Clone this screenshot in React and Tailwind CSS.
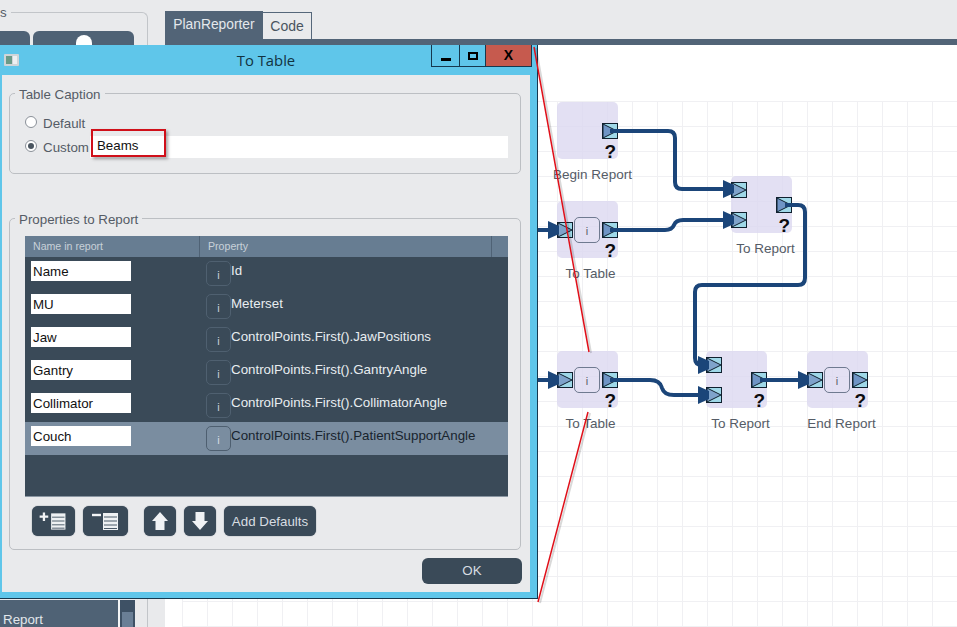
const rows = [
  { name: 'Name', prop: 'Id' },
  { name: 'MU', prop: 'Meterset' },
  { name: 'Jaw', prop: 'ControlPoints.First().JawPositions' },
  { name: 'Gantry', prop: 'ControlPoints.First().GantryAngle' },
  { name: 'Collimator', prop: 'ControlPoints.First().CollimatorAngle' },
  { name: 'Couch', prop: 'ControlPoints.First().PatientSupportAngle', selected: true },
]

const wires = [
  'M610 131 H668 Q675 131 675 138 V182 Q675 189 682 189 H727',
  'M610 230 H665 Q672 230 674 225 Q676 220 683 220 H727',
  'M785 205 H798 Q805 205 805 212 V278 Q805 285 798 285 H702 Q695 285 695 292 V358 Q695 365 702 365',
  'M610 380 H650 Q660 380 662 388 Q664 395 674 395 H702',
  'M760 380 H802',
  'M530 230 H552',
  'M530 380 H552',
]

const heads = [[723, 189], [723, 220], [698, 365], [698, 395], [798, 380], [548, 230], [548, 380]]

const Port = ({ className, input }) => (
  <svg width="16" height="16" viewBox="0 0 16 16" className={`absolute ${className}`}>
    <rect x="0.5" y="0.5" width="15" height="15" fill="#9fd8e8" stroke="#10202e" />
    <path d="M1 1 L15 8 L1 15 Z" fill={input ? '#7fa3cb' : '#6f94c5'} stroke="#10202e" strokeWidth="1" />
  </svg>
)

const InfoBtn = ({ className }) => (
  <div className={`flex items-center justify-center rounded-[5px] border border-[#6f7a90] text-[11px] text-[#555c66] ${className}`}>
    <span className="mt-[3px]">i</span>
  </div>
)

const Node = ({ className, label, labelClass, children }) => (
  <div className={`absolute w-[61px] h-[57px] rounded-[5px] bg-[#dcd8f0]/80 ${className}`}>
    {children}
    <span className="absolute right-[2px] bottom-[-2px] text-[19px] leading-[19px] font-bold text-[#0c0c10]">?</span>
    <span className={`absolute top-[65px] left-1/2 -translate-x-1/2 whitespace-nowrap text-[13.5px] leading-[15px] text-[#555c66] ${labelClass}`}>{label}</span>
  </div>
)

const Radio = ({ checked }) => (
  <div className="mt-[-2px] w-[12px] h-[12px] rounded-full border border-[#8a9098] bg-white flex items-center justify-center shrink-0">
    {checked && <div className="w-[6px] h-[6px] rounded-full bg-[#4a5560]" />}
  </div>
)

const Row = ({ name, prop, selected }) => (
  <div className={`flex h-[33px] ${selected ? 'bg-[#7a8da0] text-[#18242e]' : 'text-[#e8edf0]'}`}>
    <div className="ml-[6px] mt-[4px] w-[100px] h-[20px] bg-white px-[2px] text-[13.33px] leading-[21px] text-[#111]">{name}</div>
    <div className={`ml-[75px] mt-[4px] w-[25px] h-[25px] rounded-[5px] border flex items-center justify-center text-[11px] ${selected ? 'border-[#4e5f70] text-[#d5dce2]' : 'border-[#4f6070] text-[#c9d1d9]'}`}>
      <span className="mt-[4px]">i</span>
    </div>
    <div className="mt-[6px] text-[13.33px] leading-[15px] whitespace-nowrap">{prop}</div>
  </div>
)

const ListIcon = ({ sign }) => (
  <svg width="45" height="30" viewBox="0 0 45 30">
    {sign === 'plus' ? (
      <path d="M8 10.5 H17 M12.5 6 V15" stroke="#f2f4f6" strokeWidth="2.4" />
    ) : (
      <path d="M9 9 H18" stroke="#f2f4f6" strokeWidth="2.4" />
    )}
    <rect x="20" y="7" width="15" height="17" fill="#eef1f3" />
    <path d="M21 11 H34 M21 15 H34 M21 19 H34 M21 22.5 H34" stroke="#4a5a68" strokeWidth="1" />
  </svg>
)

const ToolBtn = ({ className, children }) => (
  <div className={`h-[30px] rounded-[6px] bg-[#3a4a58] flex items-center justify-center text-[13.33px] text-[#d8dde2] shadow-[0_0_1px_#3a4a58] ${className}`}>
    {children}
  </div>
)

export default function App() {
  return (
    <div className="relative w-[957px] h-[627px] overflow-hidden bg-[#e9eaec] font-['Liberation_Sans',sans-serif] flex">
      {/* left panel */}
      <div className="w-[165px] shrink-0 pt-[5px] pr-[17px]">
        <fieldset className="h-[622px] rounded-tr-[6px] border-t border-r border-[#c2c5c9] flex flex-col justify-between pt-[11px]">
          <legend className="pr-[4px] text-[13.33px] leading-[15px] text-[#555c66]">s</legend>
          <div className="flex gap-[3px] pr-[13px] h-[16px]">
            <div className="w-[30px] rounded-tr-[6px] bg-[#4f6275]" />
            <div className="flex-1 rounded-t-[6px] bg-[#4f6275] flex justify-center pt-[4px]">
              <div className="w-[16px] h-[12px] rounded-t-full bg-white" />
            </div>
          </div>
          <div className="flex h-[27px]">
            <div className="w-[118px] bg-[#4f6275] pl-[3px] pt-[12px] text-[13.33px] leading-[15px] text-[#e2e7ec]">Report</div>
            <div className="w-[2px] bg-[#f4f5f6]" />
            <div className="w-[15px] bg-[#3e5165] px-[2px] pt-[12px]">
              <div className="h-[15px] bg-[#6a7f96]" />
            </div>
          </div>
        </fieldset>
      </div>

      {/* designer */}
      <div className="flex-1 flex flex-col">
        <div className="flex items-end h-[39px] pt-[11px]">
          <div className="w-[98px] h-[28px] bg-[#526477] text-center text-[13.8px] leading-[28px] text-[#e4e8ec]">PlanReporter</div>
          <div className="w-[49px] h-[27px] bg-[#e9eaec] border-t border-r border-[#55677a] text-center text-[14px] leading-[26px] text-[#4a5560]">Code</div>
        </div>
        <div className="h-[6px] bg-[#526477]" />
        <div className="relative flex-1 bg-white">
          <div className="absolute left-[17px] top-[56px] right-0 bottom-0 bg-[linear-gradient(to_right,#f0f0f3_1px,transparent_1px),linear-gradient(to_bottom,#f0f0f3_1px,transparent_1px)] bg-[length:25px_25px]" />
          <Node className="left-[392px] top-[57px]" label="Begin Report" labelClass="ml-[5px]">
            <Port className="right-0 top-[21px]" />
          </Node>
          <Node className="left-[392px] top-[156px]" label="To Table" labelClass="ml-[3px]">
            <Port className="left-0 top-[21px]" input />
            <InfoBtn className="absolute left-[17px] top-[16px] w-[26px] h-[26px]" />
            <Port className="right-0 top-[21px]" />
          </Node>
          <Node className="left-[566px] top-[131px]" label="To Report" labelClass="ml-[4px]">
            <Port className="left-0 top-[6px]" input />
            <Port className="left-0 top-[36px]" input />
            <Port className="right-0 top-[21px]" />
          </Node>
          <Node className="left-[392px] top-[306px]" label="To Table" labelClass="ml-[3px]">
            <Port className="left-0 top-[21px]" input />
            <InfoBtn className="absolute left-[17px] top-[16px] w-[26px] h-[26px]" />
            <Port className="right-0 top-[21px]" />
          </Node>
          <Node className="left-[541px] top-[306px]" label="To Report" labelClass="ml-[4px]">
            <Port className="left-0 top-[6px]" input />
            <Port className="left-0 top-[36px]" input />
            <Port className="right-0 top-[21px]" />
          </Node>
          <Node className="left-[642px] top-[306px]" label="End Report" labelClass="ml-[4px]">
            <Port className="left-0 top-[21px]" input />
            <InfoBtn className="absolute left-[17px] top-[16px] w-[26px] h-[26px]" />
            <Port className="right-0 top-[21px]" />
          </Node>
        </div>
      </div>

      {/* wires */}
      <svg width="957" height="627" viewBox="0 0 957 627" className="absolute left-0 top-0 pointer-events-none">
        {wires.map((d) => (
          <path key={d} d={d} fill="none" stroke="#1b4579" strokeWidth="4" />
        ))}
        {heads.map(([x, y]) => (
          <path key={`${x}-${y}`} d={`M${x} ${y - 9} L${x + 11} ${y - 4} L${x + 11} ${y + 4} L${x} ${y + 9} Z`} fill="#1b4579" />
        ))}
      </svg>

      {/* dialog */}
      <div className="absolute left-0 top-[45px] w-[538px] h-[554px] bg-[#5fc6ea] border-r border-b border-[#16384e] flex flex-col">
        <div className="relative h-[30px] shrink-0 flex items-center justify-center">
          <svg width="15" height="12" viewBox="0 0 15 12" className="absolute left-[4px] top-[9px]">
            <rect x="0" y="0" width="15" height="12" rx="1" fill="#d0d5d8" />
            <rect x="2" y="2" width="6" height="8" fill="#6a9a88" />
            <rect x="9" y="2" width="4" height="8" fill="#eef0f2" />
          </svg>
          <span className="ml-[-5px] font-['Open_Sans',sans-serif] text-[14.8px] text-[#12333f]">To Table</span>
          <div className="absolute left-[431px] top-0 h-[22px] flex border-b border-l border-r border-[#16384e]">
            <div className="w-[28px] flex items-end justify-center pb-[5px] border-r border-[#16384e]">
              <div className="w-[10px] h-[3px] bg-black" />
            </div>
            <div className="w-[26px] flex items-center justify-center border-r border-[#16384e]">
              <div className="w-[10px] h-[8px] border-2 border-black" />
            </div>
            <div className="w-[45px] bg-[#c65a4e] flex items-center justify-center pb-[2px] text-[14px] leading-[14px] font-bold text-black">X</div>
          </div>
        </div>

        <div className="ml-[2px] mr-[7px] mb-[6px] flex-1 bg-[#e9eaec] flex flex-col pl-[7px] pr-[9px] pt-[10px]">
          <fieldset className="h-[89px] rounded-[5px] border border-[#bcbfc3] pl-[15px] pr-[12px]">
            <legend className="ml-[-10px] px-[4px] pt-[3px] text-[13.33px] leading-[13px] text-[#555c66]">Table Caption</legend>
            <div className="flex items-center h-[22px] mt-[11px] gap-[6px] text-[13.33px] text-[#555c66]">
              <Radio />
              <span className="mt-[1px]">Default</span>
            </div>
            <div className="flex items-center h-[22px] mt-[2px] gap-[6px] text-[13.33px] text-[#555c66]">
              <Radio checked />
              <span className="mt-[2px]">Custom</span>
              <div className="relative flex-1 ml-[-5px] h-[22px] bg-white pl-[7px] text-[13.33px] leading-[19px] text-[#111]">
                Beams
                <div className="absolute left-[1px] top-[-7px] w-[75px] h-[28px] border-2 border-[#d0101a] shadow-[2px_2px_3px_rgba(0,0,0,0.35)]" />
              </div>
            </div>
          </fieldset>

          <fieldset className="mt-[36px] h-[340px] rounded-[5px] border border-[#bcbfc3] pl-[15px] pr-[12px]">
            <legend className="ml-[-10px] px-[4px] pt-[3px] text-[13.33px] leading-[13px] text-[#555c66]">Properties to Report</legend>
            <div className="mt-[10px] h-[261px] bg-[#3a4a58] border-b border-[#8a96a2]">
              <div className="flex h-[21px] bg-[#677d92] text-[10.6px] leading-[21px] text-[#c8d1d9]">
                <div className="w-[175px] pl-[8px] border-r border-[#4f6275]">Name in report</div>
                <div className="w-[292px] pl-[8px] border-r border-[#4f6275]">Property</div>
              </div>
              {rows.map((r) => (
                <Row key={r.name} {...r} />
              ))}
            </div>
            <div className="flex mt-[9px] ml-[7px]">
              <ToolBtn className="w-[43px]"><ListIcon sign="plus" /></ToolBtn>
              <ToolBtn className="w-[45px] ml-[8px]"><ListIcon sign="minus" /></ToolBtn>
              <ToolBtn className="w-[32px] ml-[16px]">
                <svg width="32" height="30" viewBox="0 0 32 30">
                  <path d="M16 6 L24 15 H20.5 V24 H11.5 V15 H8 Z" fill="#f0f2f4" />
                </svg>
              </ToolBtn>
              <ToolBtn className="w-[32px] ml-[8px]">
                <svg width="32" height="30" viewBox="0 0 32 30">
                  <path d="M16 24 L24 15 H20.5 V6 H11.5 V15 H8 Z" fill="#f0f2f4" />
                </svg>
              </ToolBtn>
              <ToolBtn className="w-[92px] ml-[8px] pt-[2px]">Add Defaults</ToolBtn>
            </div>
          </fieldset>

          <div className="mt-[8px] mr-[-1px] self-end w-[100px] h-[26px] rounded-[6px] bg-[#3a4a58] text-center text-[13.33px] leading-[26px] text-[#d8dde2]">OK</div>
        </div>
      </div>

      {/* callout lines */}
      <svg width="957" height="627" viewBox="0 0 957 627" className="absolute left-0 top-0 pointer-events-none">
        <path d="M536 48 L591 353 M590 413 L540 603" fill="none" stroke="#000" strokeOpacity="0.15" strokeWidth="2" />
        <path d="M534 47 L589 352 M588 412 L538 602" fill="none" stroke="#e0101a" strokeWidth="1.5" />
      </svg>
    </div>
  )
}
